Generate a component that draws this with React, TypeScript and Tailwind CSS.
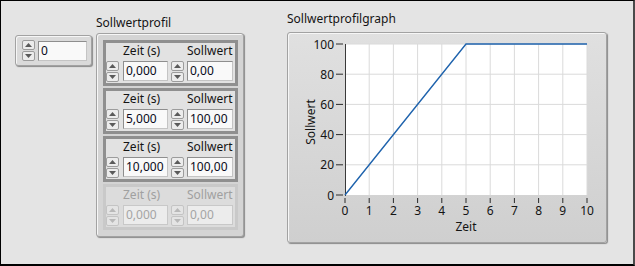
import React from 'react'

type Row = { zeit: string; soll: string; disabled?: boolean }

const rows: Row[] = [
  { zeit: '0,000', soll: '0,00' },
  { zeit: '5,000', soll: '100,00' },
  { zeit: '10,000', soll: '100,00' },
  { zeit: '0,000', soll: '0,00', disabled: true },
]

const font = { fontFamily: '"Noto Sans", "Open Sans", Arial, sans-serif' }

function Spinner({ disabled }: { disabled?: boolean }) {
  const fill = disabled ? '#b8b8b8' : '#5a5a5a'
  const btn = `flex h-[10px] w-[13px] items-center justify-center rounded-[2px] border ${
    disabled ? 'border-[#c4c4c4] bg-[#e4e4e4]' : 'border-[#9c9c9c] bg-[#ececec]'
  }`
  return (
    <div className="flex h-[21px] w-[13px] flex-col justify-between">
      <div className={btn}>
        <svg width="7" height="4" viewBox="0 0 7 4">
          <path d="M0 4 L3.5 0 L7 4 Z" fill={fill} />
        </svg>
      </div>
      <div className={btn}>
        <svg width="7" height="4" viewBox="0 0 7 4">
          <path d="M0 0 L3.5 4 L7 0 Z" fill={fill} />
        </svg>
      </div>
    </div>
  )
}

function Field({ value, width, disabled }: { value: string; width: string; disabled?: boolean }) {
  return (
    <div
      className={`h-[20px] ${width} border pl-[2px] text-[12px] leading-[18px] ${
        disabled
          ? 'border-[#c8c8c8] bg-[#ececec] text-[#a4a4a4]'
          : 'border-[#8e8e8e] border-r-[#c4c4c4] border-b-[#c4c4c4] bg-[#f9f9f9] text-[#0a0a20]'
      }`}
    >
      {value}
    </div>
  )
}

function Element({ row }: { row: Row }) {
  const label = row.disabled ? 'text-[#a0a0a0]' : 'text-[#141414]'
  return (
    <div
      className={`h-[46px] w-[135px] border-[3px] pt-[1px] ${
        row.disabled ? 'border-[#c9c9c9] bg-[#dcdcdc]' : 'border-[#8f8f8f] bg-[#e2e2e2]'
      }`}
    >
      <div className="flex">
        <div className="flex flex-col">
          <div className={`ml-[17px] text-[12px] leading-[14px] ${label}`}>Zeit (s)</div>
          <div className="mt-[3px] flex items-start gap-[4px]">
            <Spinner disabled={row.disabled} />
            <Field value={row.zeit} width="w-[45px]" disabled={row.disabled} />
          </div>
        </div>
        <div className="ml-[3px] flex flex-col">
          <div className={`ml-[16px] text-[12px] leading-[14px] ${label}`}>Sollwert</div>
          <div className="mt-[3px] flex items-start gap-[3px]">
            <Spinner disabled={row.disabled} />
            <Field value={row.soll} width="w-[46px]" disabled={row.disabled} />
          </div>
        </div>
      </div>
    </div>
  )
}

function Graph() {
  const x0 = 57
  const x1 = 299
  const y0 = 162
  const y1 = 11
  const xs = Array.from({ length: 11 }, (_, i) => x0 + ((x1 - x0) * i) / 10)
  const ys = Array.from({ length: 6 }, (_, i) => y0 - ((y0 - y1) * i) / 5)
  const grid = '#dadada'
  return (
    <svg width="318" height="209" viewBox="0 0 318 209" style={font}>
      <rect x={x0} y={y1} width={x1 - x0} height={y0 - y1} fill="#ffffff" />
      {xs.slice(1).map((x, i) => (
        <line key={'gx' + i} x1={x} y1={y1} x2={x} y2={y0} stroke={grid} strokeWidth="1" />
      ))}
      {ys.slice(1).map((y, i) => (
        <line key={'gy' + i} x1={x0} y1={y} x2={x1} y2={y} stroke={grid} strokeWidth="1" />
      ))}
      <line x1={x0 + 0.5} y1={y1} x2={x0 + 0.5} y2={y0 + 1} stroke="#3a3a3a" strokeWidth="1" />
      {ys.map((y, i) => (
        <g key={'ty' + i}>
          <line x1={48} y1={y} x2={55} y2={y} stroke="#2a2a2a" strokeWidth="1" />
          <text x={46} y={y + 4.5} fontSize="12" textAnchor="end" fill="#141414">
            {i * 20}
          </text>
        </g>
      ))}
      {xs.map((x, i) => (
        <g key={'tx' + i}>
          <line x1={x} y1={165} x2={x} y2={170} stroke="#2a2a2a" strokeWidth="1" />
          <text x={x} y={182} fontSize="12" textAnchor="middle" fill="#141414">
            {i}
          </text>
        </g>
      ))}
      <polyline
        points={`${x0},${y0} ${xs[5]},${y1} ${x1},${y1}`}
        fill="none"
        stroke="#1f63ad"
        strokeWidth="1.4"
      />
      <text x={178} y={198} fontSize="12" textAnchor="middle" fill="#141414">
        Zeit
      </text>
      <text
        x={0}
        y={0}
        fontSize="12"
        textAnchor="middle"
        fill="#141414"
        transform="translate(27 89) rotate(-90)"
      >
        Sollwert
      </text>
    </svg>
  )
}

export default function App() {
  return (
    <div
      className="flex h-[266px] w-[635px] items-start border-t border-l border-b-2 border-r-2 border-black border-r-[#4a4a4a] bg-[#e4e4e4]"
      style={font}
    >
      <div className="ml-[14px] mt-[34px] flex h-[31px] w-[77px] items-center gap-[3px] rounded-[3px] border border-[#a2a2a2] bg-[#dadada] pl-[6px] shadow-[1px_1px_1px_#8a8a8a,inset_1px_1px_0_#f6f6f6]">
        <Spinner />
        <Field value="0" width="w-[49px]" />
      </div>

      <div className="ml-[4px] mt-[14px] flex w-[148px] flex-col">
        <div className="text-[12px] leading-[16px] text-[#141414]">Sollwertprofil</div>
        <div className="mt-[2px] flex h-[204px] w-[148px] flex-col gap-[2px] rounded-[3px] border border-[#a2a2a2] bg-[#d4d4d4] pl-[6px] pt-[6px] shadow-[1px_1px_1px_#8a8a8a,inset_1px_1px_0_#f6f6f6]">
          {rows.map((r, i) => (
            <Element key={i} row={r} />
          ))}
        </div>
      </div>

      <div className="ml-[43px] mt-[10px] flex w-[320px] flex-col">
        <div className="text-[12px] leading-[16px] text-[#141414]">Sollwertprofilgraph</div>
        <div className="mt-[5px] h-[211px] w-[320px] rounded-[3px] border border-[#a2a2a2] bg-gradient-to-b from-[#e0e0e0] to-[#cfcfcf] shadow-[1px_1px_1px_#8a8a8a,inset_1px_1px_0_#f6f6f6]">
          <Graph />
        </div>
      </div>
    </div>
  )
}
